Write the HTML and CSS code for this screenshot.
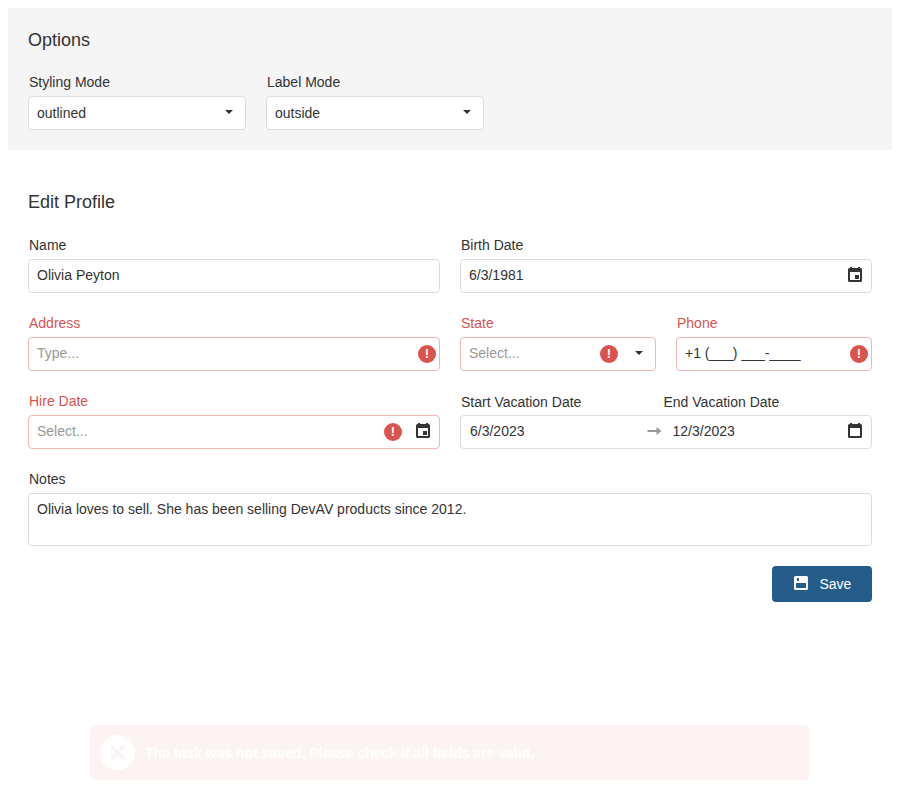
FILE: index.html
```html
<!DOCTYPE html>
<html lang="en">
<head>
<meta charset="utf-8">
<title>Edit Profile</title>
<link rel="stylesheet" href="styles.css">
</head>
<body>
<svg class="symbols" aria-hidden="true">
  <symbol id="calendar" viewBox="0 0 14 15"><path fill-rule="evenodd" d="M2 0h2v1h6V0h2v1h.5A1.5 1.5 0 0 1 14 2.500v11a1.500 1.500 0 0 1-1.500 1.500h-11A1.500 1.500 0 0 1 0 13.500v-11A1.500 1.500 0 0 1 1.500 1H2zM2 5v8h10V5z"/></symbol>
  <symbol id="arrow" viewBox="0 0 14 8"><path d="M0 3h9V0l5 4-5 4V5H0z"/></symbol>
  <symbol id="caret" viewBox="0 0 8 4"><path d="M0 0h8L4 4z"/></symbol>
</svg>
<section class="options">
  <h2>Options</h2>
  <div class="option-row">
    <div class="field"><label>Styling Mode</label><div class="box"><span class="text">outlined</span><svg class="caret"><use href="#caret"/></svg></div></div>
    <div class="field"><label>Label Mode</label><div class="box"><span class="text">outside</span><svg class="caret"><use href="#caret"/></svg></div></div>
  </div>
</section>
<main class="profile">
  <h2>Edit Profile</h2>
  <div class="form">
    <div class="field half"><label>Name</label><div class="box"><span class="text">Olivia Peyton</span></div></div>
    <div class="field half"><label>Birth Date</label><div class="box"><span class="text">6/3/1981</span><svg class="calendar" viewBox="0 0 14 15"><use href="#calendar"/><path d="M7 8h4v4H7z"/></svg></div></div>
    <div class="field half invalid"><label>Address</label><div class="box"><span class="text placeholder">Type...</span><span class="error">!</span></div></div>
    <div class="field invalid state"><label>State</label><div class="box"><span class="text placeholder">Select...</span><span class="error before-button">!</span><svg class="caret"><use href="#caret"/></svg></div></div>
    <div class="field invalid"><label>Phone</label><div class="box"><span class="text">+1 (___) ___-____</span><span class="error">!</span></div></div>
    <div class="field half invalid"><label>Hire Date</label><div class="box"><span class="text placeholder">Select...</span><span class="error before-button">!</span><svg class="calendar" viewBox="0 0 14 15"><use href="#calendar"/><path d="M7 8h4v4H7z"/></svg></div></div>
    <div class="field half range">
      <div class="range-labels"><label>Start Vacation Date</label><label>End Vacation Date</label></div>
      <div class="box"><span class="text start">6/3/2023</span><svg class="arrow"><use href="#arrow"/></svg><span class="text end">12/3/2023</span><svg class="calendar"><use href="#calendar"/></svg></div>
    </div>
    <div class="field full"><label>Notes</label><div class="box notes"><span class="text">Olivia loves to sell. She has been selling DevAV products since 2012.</span></div></div>
  </div>
  <button class="save" type="button"><svg viewBox="0 0 14 14"><path fill-rule="evenodd" d="M1.500 0h11A1.500 1.500 0 0 1 14 1.500v11a1.500 1.500 0 0 1-1.500 1.500h-11A1.500 1.500 0 0 1 0 12.500v-11A1.500 1.500 0 0 1 1.500 0zM2 7v5h10V7zM3 2v3h2V2z"/></svg><span>Save</span></button>
</main>
<div class="toast" role="alert">
  <span class="toast-icon"><svg viewBox="0 0 14 14"><path d="M1 1l12 12M13 1L1 13"/></svg></span>
  <span>The task was not saved. Please check if all fields are valid.</span>
</div>
</body>
</html>
```
FILE: styles.css
```css
* { box-sizing: border-box; }
body {
  margin: 8px;
  background: #fff;
  color: #333;
  font: 14px/20px "Liberation Sans", Arial, sans-serif;
}
svg { display: block; flex: none; fill: #333; }
.symbols { position: absolute; width: 0; height: 0; }
h2 { margin: 0; font-size: 18px; line-height: 24px; font-weight: 400; }
label { display: block; height: 20px; margin-bottom: 4px; padding-left: 1px; }
.options { height: 142px; padding: 20px; background: #f5f5f5; }
.option-row { display: flex; gap: 20px; margin-top: 20px; }
.option-row .field { width: 218px; }
.box {
  display: flex;
  align-items: center;
  height: 34px;
  padding: 0 9px 0 8px;
  border: 1px solid #ddd;
  border-radius: 4px;
  background: #fff;
}
.text { flex: 1; white-space: nowrap; }
.form .text { margin-top: -2px; }
.caret { width: 8px; height: 4px; margin: -2px 3px 0 0; }
.profile { padding: 40px 20px 0; }
.form {
  display: grid;
  grid-template-columns: repeat(4, 1fr);
  gap: 20px;
  margin-top: 21px;
}
.half { grid-column: span 2; }
.full { grid-column: span 4; }
.invalid label { color: #d9534f; }
.invalid .box { border-color: #f1b5b3; }
.placeholder { color: #999; }
.calendar { width: 14px; height: 15px; margin-top: -3px; }
.error {
  width: 18px;
  height: 18px;
  margin-right: -6px;
  border-radius: 50%;
  background: #d9534f;
  color: #fff;
  font-size: 13px;
  line-height: 18px;
  font-weight: 700;
  text-align: center;
}
.error.before-button { margin-right: 14px; }
.state .error.before-button { margin-right: 17px; }
.range-labels { display: flex; height: 24px; padding-top: 1px; }
.range-labels label { flex: none; width: 202.5px; }
.range .text { padding-left: 1px; }
.range .start { flex: none; width: 178px; }
.arrow { width: 15px; height: 8px; margin-top: -2px; fill: #999; }
.range .end { padding-left: 10.5px; }
.notes { height: 53px; align-items: flex-start; }
.notes .text { margin-top: 5px; }
.save {
  display: flex;
  align-items: center;
  width: 100px;
  height: 36px;
  margin: 20px 0 0 auto;
  padding: 0 0 0 22.4px;
  border: 0;
  border-radius: 4px;
  background: #265c89;
  color: #fff;
  font: inherit;
}
.save svg { width: 14px; height: 14px; margin: -2px 11px 0 0; fill: #fff; }
.toast {
  display: flex;
  align-items: center;
  width: 720px;
  height: 55px;
  margin: 123px auto 0;
  padding-left: 10px;
  border-radius: 6px;
  background: #fdf3f3;
  color: #fff;
  font-weight: 700;
}
.toast-icon {
  display: grid;
  place-items: center;
  width: 35px;
  height: 35px;
  margin-right: 10px;
  border-radius: 50%;
  background: #fff;
}
.toast-icon svg { width: 15px; height: 15px; stroke: #fdf3f3; stroke-width: 3; }
```
